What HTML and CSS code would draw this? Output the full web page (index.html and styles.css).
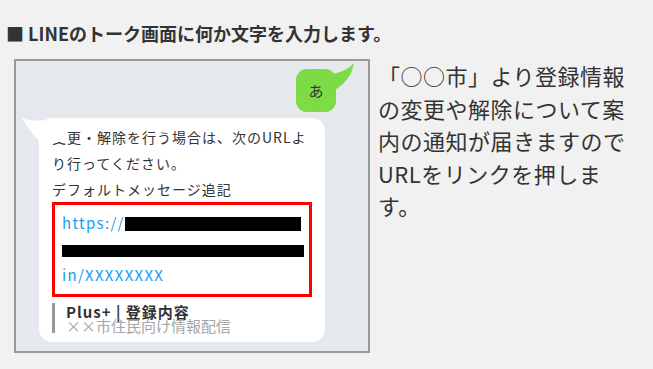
FILE: index.html
```html
<!DOCTYPE html>
<html lang="ja">
<head>
  <meta charset="UTF-8" />
  <title>LINE登録手順</title>
  <link rel="stylesheet" href="styles.css">
</head>
<body>
<h1 class="step-title"><span class="mark">■</span> LINEのトーク画面に何か文字を入力します。</h1>

<div class="step">
  <div class="shot">
    <div class="bubble-me">
      あ
      <svg class="tail-me" width="24" height="30" viewBox="0 0 24 30"><path d="M0 11 Q14 8 21 0 Q18 18 0 28 Z" fill="#7ddc45"/></svg>
    </div>

    <div class="bubble-bot">
      <svg class="tail-bot" width="26" height="30" viewBox="0 0 26 30"><path d="M24 2 Q12 4 3 0 Q12 16 24 26 Z" fill="#fff"/></svg>
      <p class="msg"><span class="cut">変</span>更・解除を行う場合は、次のURLより行ってください。</p>
      <p class="msg">デフォルトメッセージ追記</p>
      <div class="url-box">
        <div class="url-line">https://<span class="redact first"></span></div>
        <div class="url-line"><span class="redact full"></span></div>
        <div class="url-line">in/XXXXXXXX</div>
      </div>
      <div class="sender">
        <div class="sender-name">Plus+ | 登録内容</div>
        <div class="sender-sub">××市住民向け情報配信</div>
      </div>
    </div>
  </div>

  <p class="desc">「○○市」より登録情報の変更や解除について案内の通知が届きますのでURLをリンクを押します。</p>
</div>
</body>
</html>
```

FILE: styles.css
```css
body {
    margin: 0;
    background-color: #f1f1f1;
    color: #333;
    font-family: "Noto Sans CJK JP", "Noto Sans", sans-serif;
}

.step-title {
    margin: 19px 0 12px 6px;
    font-size: 18px;
    line-height: 28px;
    font-weight: 700;
    color: #333;
}

.step {
    display: flex;
    align-items: flex-start;
    gap: 8px;
    margin-left: 14px;
}

.shot {
    width: 352px;
    height: 290px;
    border: 2px solid #999;
    background-color: #e5e8ed;
    display: flex;
    flex-direction: column;
    align-items: flex-start;
}

.bubble-me {
    position: relative;
    align-self: flex-end;
    margin: 8px 32px 0 0;
    width: 40px;
    height: 43px;
    border-radius: 11px;
    background-color: #7ddc45;
    color: #333;
    font-size: 15px;
    display: flex;
    align-items: center;
    justify-content: center;
}

.tail-me {
    position: absolute;
    left: 37px;
    top: -6px;
}

.bubble-bot {
    position: relative;
    margin: 6px 0 0 23px;
    width: 260px;
    padding: 6px 13px 9px 13px;
    background-color: #fff;
    border-radius: 13px;
}

.tail-bot {
    position: absolute;
    left: -20px;
    top: 0;
}

.msg {
    margin: 0;
    font-size: 14px;
    line-height: 26px;
    letter-spacing: 1px;
    color: #333;
}

.cut {
    position: relative;
}

.cut::after {
    content: "";
    position: absolute;
    left: -1px;
    right: 0;
    top: 3px;
    height: 12px;
    background-color: #fff;
}

.url-box {
    border: 3px solid #f00;
    padding: 5px 7px 6px 7px;
}

.url-line {
    font-size: 15px;
    line-height: 26px;
    letter-spacing: 1.3px;
    color: #1a9af0;
    white-space: nowrap;
}

.redact {
    display: inline-block;
    height: 14px;
    background-color: #000;
    vertical-align: -2px;
}

.redact.first {
    width: 176px;
}

.redact.full {
    width: 242px;
    height: 12px;
}

.sender {
    margin-top: 6px;
    border-left: 3px solid #999;
    padding-left: 11px;
    height: 30px;
}

.sender-name {
    font-size: 15px;
    line-height: 17px;
    font-weight: 700;
    letter-spacing: 1px;
    color: #333;
}

.sender-sub {
    font-size: 15px;
    line-height: 12px;
    color: #a5a5a5;
}

.desc {
    margin: 0;
    width: 250px;
    font-size: 22px;
    line-height: 32.5px;
    letter-spacing: 0.5px;
    color: #333;
}
```
